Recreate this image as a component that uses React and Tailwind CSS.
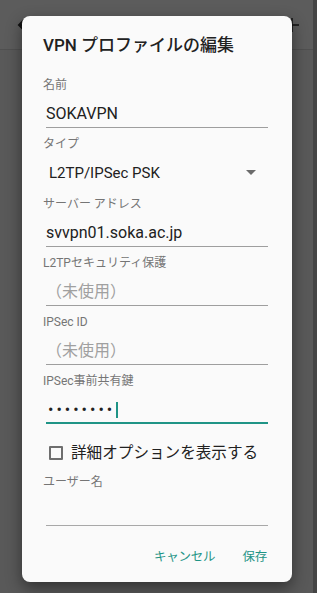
import React from 'react';

const font = { fontFamily: 'Roboto, "Noto Sans CJK JP", sans-serif' };

function Label({ children }) {
  return <div className="h-[16px] text-[12px] leading-[16px] text-[#757575]">{children}</div>;
}

function TextField({ label, value }) {
  return (
    <div className="mb-[8px]">
      <Label>{label}</Label>
      <div className="ml-[3px] mr-[3px] pt-[9px] pb-[1px] border-b border-[#9e9e9e]">
        {value ? (
          <div className="h-[24px] text-[16px] leading-[24px] text-[#212121]">{value}</div>
        ) : (
          <div className="h-[24px] text-[16px] leading-[24px] text-[#a0a0a0]">（未使用）</div>
        )}
      </div>
    </div>
  );
}

export default function App() {
  return (
    <div className="relative w-[317px] h-[593px] overflow-hidden bg-[#595959]" style={font}>
      {/* app bar behind the dialog */}
      <div className="flex h-[50px] items-center justify-between border-b border-[#505050] bg-[#5c5c5c] pl-[16px] pr-[17px]">
        <svg width="16" height="16" viewBox="0 0 16 16">
          <path d="M14 8H3M8 3L3 8l5 5" stroke="#111" strokeWidth="2" fill="none" />
        </svg>
        <svg width="16" height="16" viewBox="0 0 16 16">
          <path d="M8 1v14M1 8h14" stroke="#111" strokeWidth="1.5" fill="none" />
        </svg>
      </div>
      <div className="absolute right-0 top-0 h-full w-[4px] bg-[#454545]" />

      {/* dialog */}
      <div className="absolute left-[22px] top-[16px] flex h-[566px] w-[270px] flex-col rounded-[8px] bg-[#fafafa] px-[21px] pt-[19px] shadow-[0_6px_16px_rgba(0,0,0,0.45)]">
        <div className="h-[20px] text-[17px] font-medium leading-[20px] text-[#212121]">VPN プロファイルの編集</div>

        <div className="mt-[22px]">
          <TextField label="名前" value="SOKAVPN" />

          <div className="mb-[9px]">
            <Label>タイプ</Label>
            <div className="ml-[6px] mr-[3px] flex h-[35px] items-center justify-between pt-[9px] pb-[2px]">
              <span className="text-[15px] leading-[24px] text-[#212121]">L2TP/IPSec PSK</span>
              <svg width="10" height="6" viewBox="0 0 10 6" className="mr-[12px]">
                <path d="M0 0h10L5 5z" fill="#6b6b6b" />
              </svg>
            </div>
          </div>

          <TextField label="サーバー アドレス" value="svvpn01.soka.ac.jp" />
          <TextField label="L2TPセキュリティ保護" />
          <TextField label="IPSec ID" />

          <div>
            <Label>IPSec事前共有鍵</Label>
            <div className="ml-[3px] mr-[3px] flex h-[35px] items-center pt-[8px] border-b-2 border-[#1f9486]">
              <span className="pl-[2px] text-[16px] tracking-[3px] text-[#212121]">••••••••</span>
              <span className="ml-[1px] h-[16px] w-[2px] bg-[#1f9486]" />
            </div>
          </div>
        </div>

        <div className="mt-[20px] flex h-[18px] items-center pl-[6px]">
          <span className="h-[14px] w-[14px] rounded-[1px] border-2 border-[#6e6e6e]" />
          <span className="ml-[8px] text-[15.6px] leading-[18px] text-[#212121]">詳細オプションを表示する</span>
        </div>

        <div className="mt-[12px]">
          <Label>ユーザー名</Label>
          <div className="ml-[3px] mr-[3px] h-[36px] border-b border-[#a8a8a8]" />
        </div>

        <div className="mt-auto mb-[15px] flex justify-end gap-[27px] pr-[4px]">
          <span className="text-[12.5px] leading-[20px] tracking-[-0.2px] text-[#1f9486]">キャンセル</span>
          <span className="text-[12.5px] leading-[20px] tracking-[-0.2px] text-[#1f9486]">保存</span>
        </div>
      </div>
    </div>
  );
}
